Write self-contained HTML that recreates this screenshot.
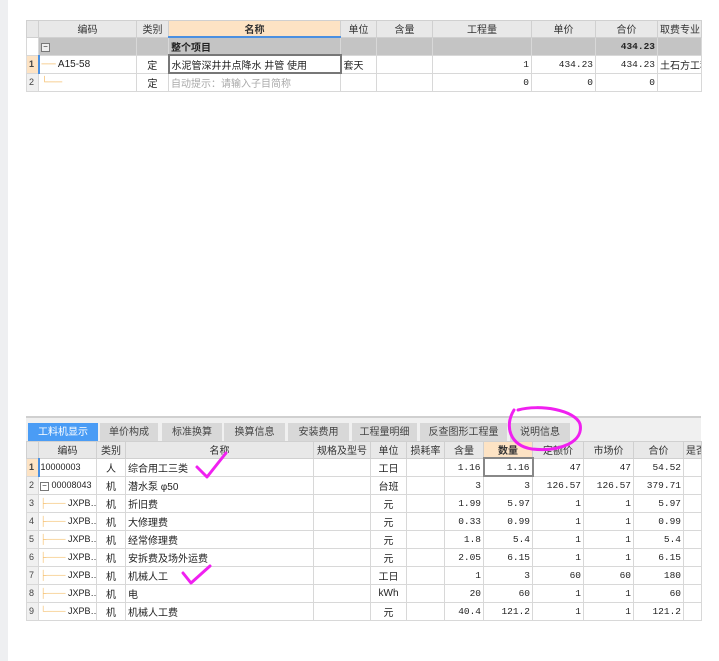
<!DOCTYPE html>
<html><head><meta charset="utf-8"><style>
*{margin:0;padding:0;box-sizing:border-box}
body{width:719px;height:661px;background:#fff;position:relative;overflow:hidden;font-family:"Liberation Sans","Noto Sans CJK SC",sans-serif;font-size:10px;color:#222}
.strip{position:absolute;left:0;top:0;width:8px;height:661px;background:#eeeff1}
table{position:absolute;border-collapse:collapse;table-layout:fixed}
td{border:1px solid #d8d8d8;height:18px;padding:0 2px;white-space:nowrap;overflow:hidden;font-size:10px;vertical-align:middle}
tr.h td{background:#e8e8e8;text-align:center;height:14px;border-color:#d0d0d0;color:#333}
.r{text-align:right;font-family:"Liberation Mono",monospace;font-size:9.5px}
.c{text-align:center}
.n{background:#f0f0f0;font-size:9px;color:#444}
.n1{background:#fde3c4;font-weight:bold;border-left:1px solid #ddd}
.hl{background:#fde3c4 !important;font-weight:bold}
.line{color:#f5c070}
.cd{font-size:9px;padding:0 1px}
.tabs{position:absolute;left:26px;top:416px;width:675px;height:25px;background:#f0f0f0;border-top:2px solid #d0d0d0}
.tab{position:absolute;top:5px;height:19px;background:#d8d8d8;color:#444;text-align:center;line-height:19px;font-size:10px}
</style></head><body>
<div class="strip"></div>
<table style="left:26px;top:20px;width:675px">
<colgroup><col style="width:12px"><col style="width:98px"><col style="width:32px"><col style="width:172px"><col style="width:36px"><col style="width:56px"><col style="width:99px"><col style="width:64px"><col style="width:62px"><col style="width:44px"></colgroup>
<tr class="h"><td class="n"></td><td>编码</td><td>类别</td><td class="hl" style="border-bottom:2px solid #4a90e2">名称</td><td>单位</td><td>含量</td><td>工程量</td><td>单价</td><td>合价</td><td>取费专业</td></tr>
<tr style="background:#c4c4c4"><td class="n" style="background:#fff"></td><td><span style="display:inline-block;width:9px;height:9px;border:1px solid #777;background:#eee;font-size:8px;line-height:6px;text-align:center">−</span></td><td></td><td style="font-weight:bold">整个项目</td><td></td><td></td><td></td><td></td><td class="r" style="font-weight:bold">434.23</td><td></td></tr>
<tr><td class="n n1" style="border-right:2px solid #4a90e2">1</td><td><span class="line">──</span> A15-58</td><td class="c">定</td><td style="border:2px solid #777">水泥管深井井点降水 井管 使用</td><td>套天</td><td></td><td class="r">1</td><td class="r">434.23</td><td class="r">434.23</td><td>土石方工程</td></tr>
<tr><td class="n">2</td><td><span class="line">└──</span></td><td class="c">定</td><td style="color:#aaa">自动提示：请输入子目简称</td><td></td><td></td><td class="r">0</td><td class="r">0</td><td class="r">0</td><td></td></tr>
</table>

<div class="tabs">
<div class="tab" style="left:2px;width:70px;background:#4a9cf5;color:#fff">工料机显示</div>
<div class="tab" style="left:74px;width:58px">单价构成</div>
<div class="tab" style="left:136px;width:60px">标准换算</div>
<div class="tab" style="left:198px;width:61px">换算信息</div>
<div class="tab" style="left:262px;width:61px">安装费用</div>
<div class="tab" style="left:326px;width:65px">工程量明细</div>
<div class="tab" style="left:394px;width:87px">反查图形工程量</div>
<div class="tab" style="left:484px;width:60px">说明信息</div>
</div>

<table style="left:26px;top:441px;width:675px">
<colgroup><col style="width:12px"><col style="width:58px"><col style="width:29px"><col style="width:188px"><col style="width:57px"><col style="width:36px"><col style="width:38px"><col style="width:39px"><col style="width:49px"><col style="width:51px"><col style="width:50px"><col style="width:50px"><col style="width:18px"></colgroup>
<tr class="h"><td class="n"></td><td>编码</td><td>类别</td><td>名称</td><td>规格及型号</td><td>单位</td><td>损耗率</td><td>含量</td><td class="hl">数量</td><td>定额价</td><td>市场价</td><td>合价</td><td>是否</td></tr>
<tr><td class="n n1" style="border-right:2px solid #4a90e2">1</td><td class="cd">10000003</td><td class="c">人</td><td>综合用工三类</td><td></td><td class="c">工日</td><td></td><td class="r">1.16</td><td class="r" style="border:2px solid #888">1.16</td><td class="r">47</td><td class="r">47</td><td class="r">54.52</td><td></td></tr>
<tr><td class="n">2</td><td class="cd"><span style="display:inline-block;width:9px;height:9px;border:1px solid #777;font-size:8px;line-height:6px;text-align:center">−</span> 00008043</td><td class="c">机</td><td>潜水泵 φ50</td><td></td><td class="c">台班</td><td></td><td class="r">3</td><td class="r">3</td><td class="r">126.57</td><td class="r">126.57</td><td class="r">379.71</td><td></td></tr>
<tr><td class="n">3</td><td class="cd"><span class="line">├───</span> JXPB…</td><td class="c">机</td><td>折旧费</td><td></td><td class="c">元</td><td></td><td class="r">1.99</td><td class="r">5.97</td><td class="r">1</td><td class="r">1</td><td class="r">5.97</td><td></td></tr>
<tr><td class="n">4</td><td class="cd"><span class="line">├───</span> JXPB…</td><td class="c">机</td><td>大修理费</td><td></td><td class="c">元</td><td></td><td class="r">0.33</td><td class="r">0.99</td><td class="r">1</td><td class="r">1</td><td class="r">0.99</td><td></td></tr>
<tr><td class="n">5</td><td class="cd"><span class="line">├───</span> JXPB…</td><td class="c">机</td><td>经常修理费</td><td></td><td class="c">元</td><td></td><td class="r">1.8</td><td class="r">5.4</td><td class="r">1</td><td class="r">1</td><td class="r">5.4</td><td></td></tr>
<tr><td class="n">6</td><td class="cd"><span class="line">├───</span> JXPB…</td><td class="c">机</td><td>安拆费及场外运费</td><td></td><td class="c">元</td><td></td><td class="r">2.05</td><td class="r">6.15</td><td class="r">1</td><td class="r">1</td><td class="r">6.15</td><td></td></tr>
<tr><td class="n">7</td><td class="cd"><span class="line">├───</span> JXPB…</td><td class="c">机</td><td>机械人工</td><td></td><td class="c">工日</td><td></td><td class="r">1</td><td class="r">3</td><td class="r">60</td><td class="r">60</td><td class="r">180</td><td></td></tr>
<tr><td class="n">8</td><td class="cd"><span class="line">├───</span> JXPB…</td><td class="c">机</td><td>电</td><td></td><td class="c">kWh</td><td></td><td class="r">20</td><td class="r">60</td><td class="r">1</td><td class="r">1</td><td class="r">60</td><td></td></tr>
<tr><td class="n">9</td><td class="cd"><span class="line">└───</span> JXPB…</td><td class="c">机</td><td>机械人工费</td><td></td><td class="c">元</td><td></td><td class="r">40.4</td><td class="r">121.2</td><td class="r">1</td><td class="r">1</td><td class="r">121.2</td><td></td></tr>
</table>

<svg width="719" height="661" style="position:absolute;left:0;top:0" fill="none" stroke="#f020f0" stroke-width="3" stroke-linecap="round" stroke-linejoin="round">
<path d="M197 467 L207 477 L226 453"/>
<path d="M183 573 L191 583 L210 566"/>
<path d="M518 410 C 540 404, 575 410, 580 424 C 584 442, 560 452, 532 449 C 510 446, 504 426, 514 410"/>
</svg>
</body></html>
